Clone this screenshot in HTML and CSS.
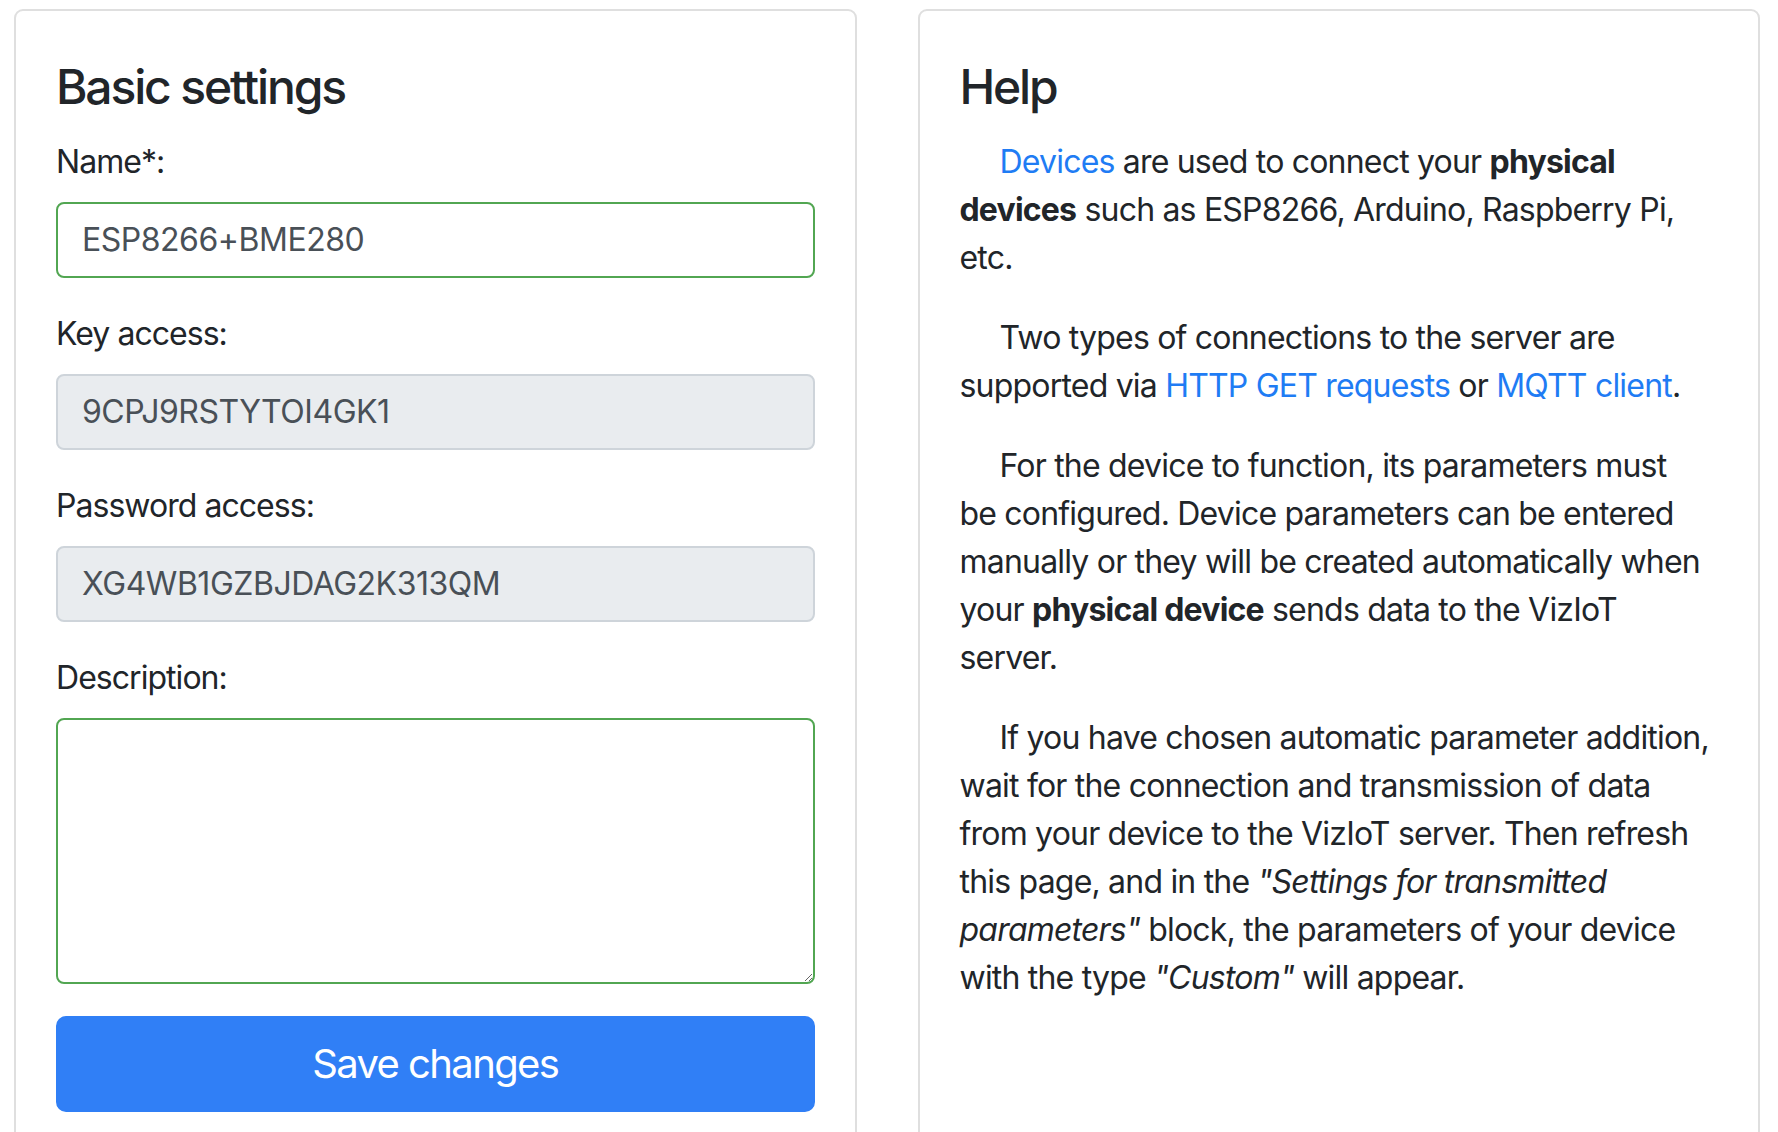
FILE: index.html
```html
<!DOCTYPE html>
<html lang="en">
<head>
<meta charset="utf-8">
<title>Device settings</title>
<link rel="stylesheet" href="styles.css">
</head>
<body>
<div class="row">
  <section class="card">
    <div class="card-body">
      <h4 class="card-title">Basic settings</h4>
      <form class="form">
        <div class="form-group">
          <label class="label" for="name">Name*:</label>
          <input class="control valid" id="name" type="text" value="ESP8266+BME280">
        </div>
        <div class="form-group">
          <label class="label" for="key">Key access:</label>
          <input class="control readonly" id="key" type="text" value="9CPJ9RSTYTOI4GK1" readonly>
        </div>
        <div class="form-group">
          <label class="label" for="pass">Password access:</label>
          <input class="control readonly" id="pass" type="text" value="XG4WB1GZBJDAG2K313QM" readonly>
        </div>
        <div class="form-group">
          <label class="label" for="desc">Description:</label>
          <textarea class="control valid area" id="desc"></textarea>
        </div>
        <button class="btn" type="button">Save changes</button>
      </form>
    </div>
  </section>
  <section class="card">
    <div class="card-body">
      <h4 class="card-title">Help</h4>
      <p class="help"><a href="#">Devices</a> are used to connect your <b>physical devices</b> such as ESP8266, Arduino, Raspberry Pi, etc.</p>
      <p class="help">Two types of connections to the server are supported via <a href="#">HTTP GET requests</a> or <a href="#">MQTT client</a>.</p>
      <p class="help">For the device to function, its parameters must be&nbsp;configured. Device parameters can be entered manually or they will be created automatically when your <b>physical device</b> sends data to the VizIoT server.</p>
      <p class="help">If you have chosen automatic parameter addition, wait for the connection and transmission of data from your device to the VizIoT server. Then refresh this page, and in the <i>"Settings for transmitted parameters"</i> block, the parameters of your device with the type <i>"Custom"</i> will appear.</p>
    </div>
  </section>
</div>
</body>
</html>
```
FILE: styles.css
```css
* { box-sizing: border-box; }

html, body {
  margin: 0;
  padding: 0;
  background: #ffffff;
}

body {
  font-family: Inter, "Noto Sans", sans-serif;
  font-size: 32px;
  line-height: 48px;
  letter-spacing: -0.025em;
  color: #212529;
}

.row {
  display: flex;
  align-items: stretch;
  gap: 61px;
  padding: 9px 18px 0 14px;
}

.card {
  flex: 1 1 0;
  border: 2px solid #dfdfdf;
  border-radius: 9px;
  background: #fff;
}

.card-body {
  padding: 47px 40px 40px;
}

.card-title {
  margin: 0 0 22px;
  font-size: 48px;
  line-height: 57.6px;
  font-weight: 450;
  letter-spacing: -0.045em;
  color: #212529;
}

.form-group {
  margin-bottom: 32px;
}

.label {
  display: block;
  margin-bottom: 16px;
  letter-spacing: -0.03em;
}

.control {
  display: block;
  width: 100%;
  height: 76px;
  padding: 12px 24px;
  font-family: inherit;
  font-size: 32px;
  line-height: 48px;
  letter-spacing: -0.015em;
  color: #495057;
  background: #fff;
  border: 2px solid #ced4da;
  border-radius: 8px;
  outline: none;
}

.control.valid {
  border-color: #52a652;
}

.control.readonly {
  background: #e9ecef;
  border-color: #ced4da;
}

.area {
  height: 266px;
  resize: vertical;
}

.btn {
  display: block;
  width: 100%;
  height: 96px;
  margin-top: 2px;
  padding: 0 32px;
  font-family: inherit;
  font-size: 40px;
  line-height: 60px;
  letter-spacing: -0.04em;
  color: #fff;
  background: #307ff6;
  border: 2px solid #307ff6;
  border-radius: 10px;
}

.help {
  margin: 0 0 32px;
  text-indent: 40px;
}

.help a {
  color: #1f7cf4;
  text-decoration: none;
}

.help b {
  font-weight: 700;
}
```
